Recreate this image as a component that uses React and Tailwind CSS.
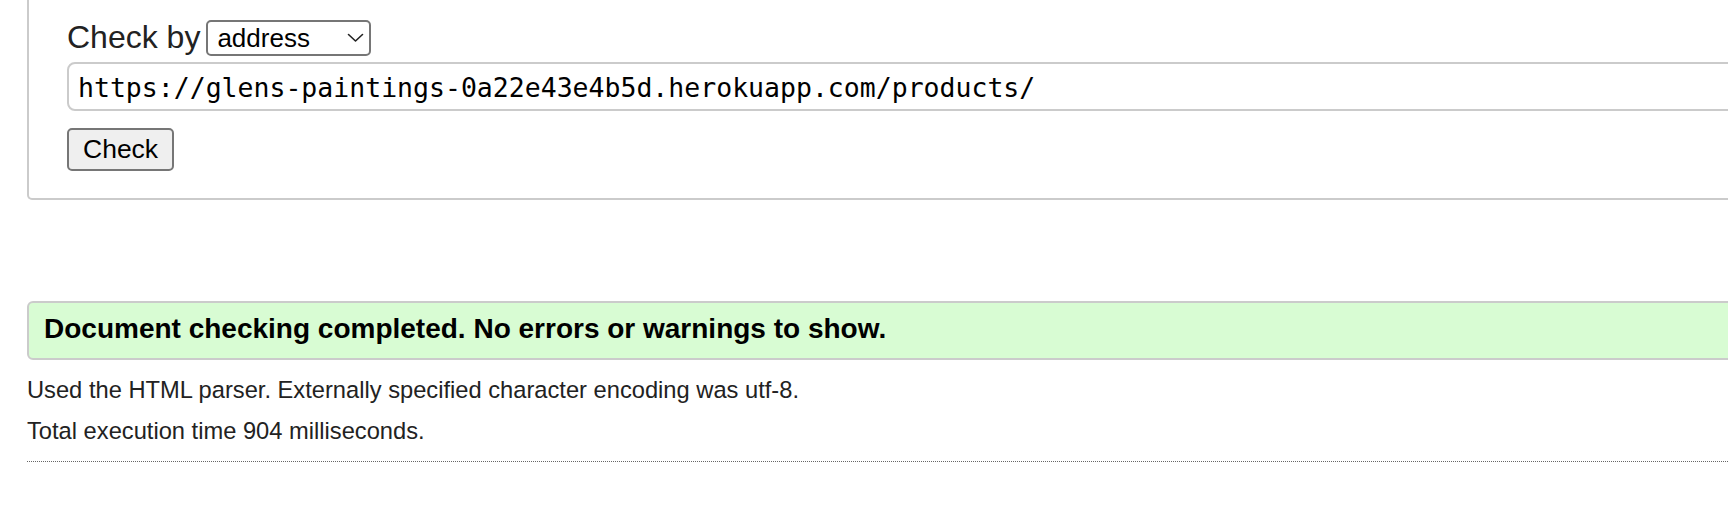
export default function App() {
  const url = 'https://glens-paintings-0a22e43e4b5d.herokuapp.com/products/';

  return (
    <div className="w-full h-[518px] overflow-hidden bg-white font-['Liberation_Sans',Arial,sans-serif]">
      <div className="w-[1800px] pl-[27px]">
        {/* form box, top edge scrolled out of view */}
        <div className="border-x-2 border-b-2 border-[#cbcbcb] rounded-b-[5px] pt-[20px] pb-[27px] pl-[38px]">
          <div className="flex items-start h-[36px]">
            <span className="text-[32px] leading-[34px] text-[#222]">Check by</span>
            <div className="ml-[6px] w-[165px] h-[36px] border-2 border-[#767676] rounded-[5px] flex items-center justify-between pl-[9px] pr-[5px] bg-white">
              <span className="text-[26px] leading-none text-black">address</span>
              <svg width="17" height="10" viewBox="0 0 17 10" fill="none">
                <polyline points="1.5,1.5 8.5,8 15.5,1.5" stroke="#222" strokeWidth="1.6" strokeLinecap="round" strokeLinejoin="round" />
              </svg>
            </div>
          </div>

          <div className="mt-[6px] h-[49px] border-2 border-[#cbcbcb] rounded-[8px] flex items-center pl-[9px] pt-[3px]">
            <span className="font-['DejaVu_Sans_Mono',monospace] text-[26.5px] leading-none text-black">{url}</span>
          </div>

          <button className="mt-[17px] h-[43px] px-[14px] border-2 border-[#767676] rounded-[5px] bg-[#efefef] text-[26.5px] leading-none text-black">
            Check
          </button>
        </div>

        {/* result message */}
        <div className="mt-[101px] border-2 border-[#cbcbcb] rounded-[6px] bg-[#d8fcd3] pt-[10px] pb-[13px] pl-[15px]">
          <h2 className="text-[28px] leading-[32px] font-bold text-black">
            Document checking completed. No errors or warnings to show.
          </h2>
        </div>

        <p className="mt-[16px] text-[23.7px] leading-[28px] text-[#222]">
          Used the HTML parser. Externally specified character encoding was utf-8.
        </p>
        <p className="mt-[13px] text-[23.7px] leading-[28px] text-[#222]">
          Total execution time 904 milliseconds.
        </p>

        <hr className="mt-[16px] border-0 border-t border-dotted border-[#666]" />
      </div>
    </div>
  );
}
